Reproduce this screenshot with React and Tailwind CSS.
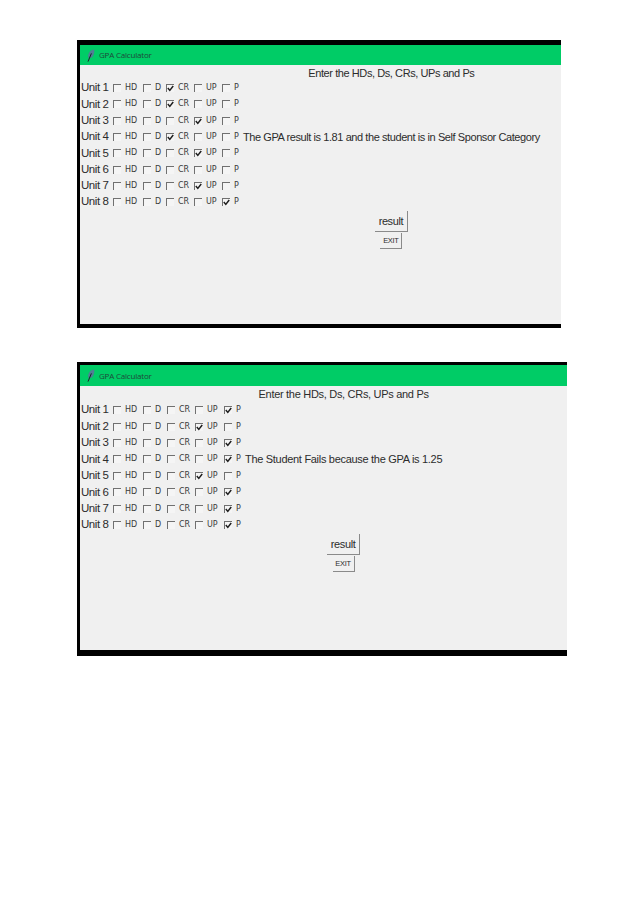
const OPTIONS = ['HD', 'D', 'CR', 'UP', 'P'];

const FIRST_RUN = {
  checked: ['CR', 'CR', 'UP', 'CR', 'UP', null, 'UP', 'P'],
  message: 'The GPA result is 1.81 and the student is in Self Sponsor Category',
};

const SECOND_RUN = {
  checked: ['P', 'UP', 'P', 'P', 'UP', 'P', 'P', 'P'],
  message: 'The Student Fails because the GPA is 1.25',
};

function Feather() {
  return (
    <svg className="shrink-0" width="9" height="13" viewBox="0 0 9 13" fill="none">
      <path d="M8.2 0.4C4.2 0.8 1.8 4 2 8.6L5.6 8.8C7.8 6.2 8.8 3.2 8.2 0.4Z" fill="#4f7f95" />
      <path d="M5.4 4.4L2 12.6" stroke="#1c2228" strokeWidth="1" />
    </svg>
  );
}

function Checkbox({ checked }) {
  return (
    <span className="w-[8px] h-[8px] shrink-0 border-t border-l border-[#707070] bg-[#f5f5f5] flex items-center justify-center">
      {checked && (
        <svg width="7" height="7" viewBox="0 0 7 7" fill="none">
          <path d="M0.8 3L2.8 5.4L6.2 1" stroke="#1e1e1e" strokeWidth="1.5" />
        </svg>
      )}
    </span>
  );
}

function Option({ label, checked }) {
  return (
    <div className="flex items-center gap-[4px]">
      <Checkbox checked={checked} />
      <span className="text-[8px] text-[#3a3a3a] font-['DejaVu_Sans',sans-serif] leading-none">{label}</span>
    </div>
  );
}

function CalculatorWindow({ run, gridClass, windowClass, barClass, textClass }) {
  return (
    <div className={`bg-[#f0f0f0] border-l-[3px] border-black flex flex-col ${windowClass}`}>
      <div className={`bg-[#00cc66] flex items-center gap-[3px] pl-[6px] shrink-0 ${barClass}`}>
        <Feather />
        <span className="text-[8px] tracking-[-0.2px] font-medium text-[#1f4a3a] font-['Open_Sans',sans-serif] pl-[1px]">GPA Calculator</span>
      </div>
      <div className={`grid pl-[1px] pt-[1px] font-['Liberation_Sans',sans-serif] text-[#2c2c2c] w-max ${gridClass}`}>
        <div className={`col-start-7 text-[11px] leading-[14px] text-center ${textClass}`}>Enter the HDs, Ds, CRs, UPs and Ps</div>
        {run.checked.map((value, i) => (
          <div key={i} className="contents">
            <div className="col-start-1 text-[11.5px] tracking-[-0.45px] self-center leading-none">Unit {i + 1}</div>
            {OPTIONS.map((opt) => (
              <Option key={opt} label={opt} checked={value === opt} />
            ))}
            <div className={`text-[11px] self-center leading-none whitespace-nowrap ${textClass}`}>{i === 3 ? run.message : ''}</div>
          </div>
        ))}
        <div className="col-start-7 flex flex-col items-center pt-[1px] gap-[1px]">
          <button className="w-[33px] h-[21px] text-[11px] tracking-[-0.4px] leading-none border-r border-b border-[#8a8a8a] bg-[#f0f0f0]">result</button>
          <button className="w-[22px] h-[16px] text-[7.5px] tracking-[-0.3px] leading-none border-r border-b border-[#8a8a8a] bg-[#f0f0f0]">EXIT</button>
        </div>
      </div>
    </div>
  );
}

export default function App() {
  return (
    <div className="w-[638px] h-[902px] bg-white pt-[40px] pl-[77px] flex flex-col overflow-hidden">
      <CalculatorWindow
        run={FIRST_RUN}
        gridClass="grid-cols-[32px_30px_23px_28px_28px_21px_auto] grid-rows-[14px_repeat(8,16.3px)_auto]"
        windowClass="w-[484px] h-[288px] border-t-[5px] border-b-[4px]"
        barClass="h-[20px]"
        textClass="tracking-[-0.42px]"
      />
      <div className="h-[34px] shrink-0" />
      <CalculatorWindow
        run={SECOND_RUN}
        gridClass="grid-cols-[32px_30px_24px_28px_29px_21px_auto] grid-rows-[15px_repeat(8,16.43px)_auto]"
        windowClass="w-[490px] h-[294px] border-t-[3px] border-b-[6px]"
        barClass="h-[21px]"
        textClass="tracking-[-0.3px]"
      />
    </div>
  );
}
